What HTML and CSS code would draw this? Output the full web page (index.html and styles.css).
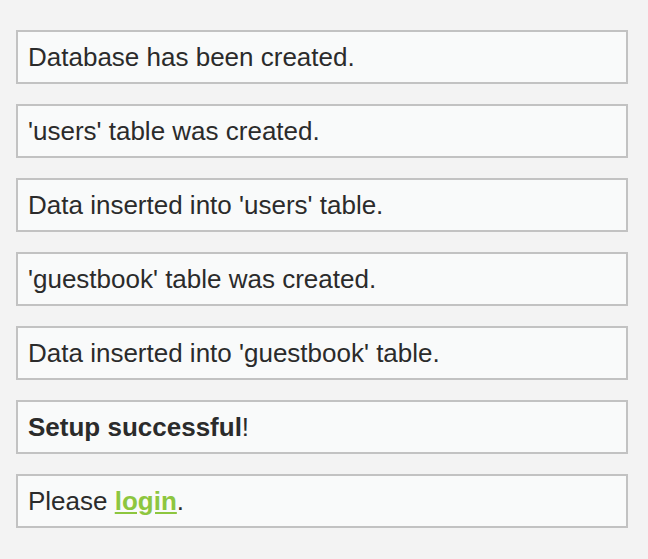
FILE: index.html
```html
<!DOCTYPE html>
<html>
<head>
<meta charset="utf-8">
<link rel="stylesheet" href="styles.css">
</head>
<body>
<div class="page">
  <div class="msg">Database has been created.</div>
  <div class="msg">'users' table was created.</div>
  <div class="msg">Data inserted into 'users' table.</div>
  <div class="msg">'guestbook' table was created.</div>
  <div class="msg">Data inserted into 'guestbook' table.</div>
  <div class="msg"><strong>Setup successful</strong>!</div>
  <div class="msg">Please <a class="link" href="#">login</a>.</div>
</div>
</body>
</html>
```
FILE: styles.css
```css
html, body {
  margin: 0;
  padding: 0;
  background: #f3f3f3;
}
body {
  font-family: "Liberation Sans", Arial, Helvetica, sans-serif;
  color: #2b2b2b;
}
.page {
  display: flex;
  flex-direction: column;
  gap: 20px;
  padding: 30px 20px 0 16px;
}
.msg {
  background: #f9fafa;
  border: 2px solid #c2c2c2;
  padding: 10px 10px;
  font-size: 26px;
  line-height: 30px;
}
.msg strong {
  font-weight: bold;
}
.link {
  color: #8dc63f;
  font-weight: bold;
  text-decoration: underline;
}
```
